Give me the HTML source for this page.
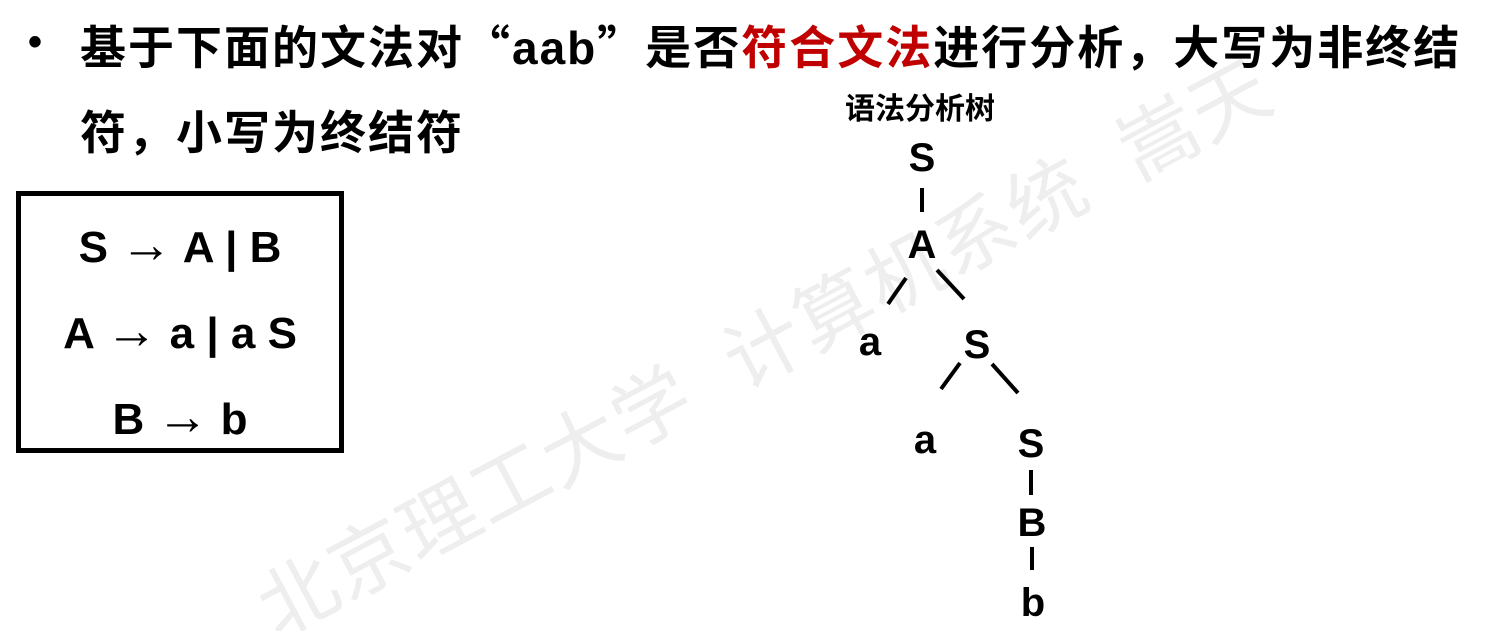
<!DOCTYPE html>
<html style="overflow:hidden"><head><meta charset="utf-8"><style>
html,body{width:1485px;height:631px;overflow:hidden}
body{margin:0;background:#fff;position:relative;font-family:"Liberation Sans","Noto Sans CJK SC",sans-serif;font-weight:bold;color:#000}
.a{position:absolute;white-space:nowrap;line-height:1}
.wm{position:absolute;left:235px;top:560px;font-size:78px;font-weight:normal;color:#eeeeee;transform-origin:0 0;transform:rotate(-28deg);white-space:nowrap;letter-spacing:2px}
.t{position:absolute;font-size:40px;line-height:1;transform:translate(-50%,-50%)}
.r{font-size:44px;text-align:center;position:absolute;left:0;width:100%;line-height:44px;height:44px}
.q{font-family:"Noto Sans CJK SC",sans-serif}
.ar{font-size:52px;font-weight:normal;line-height:44px}
</style></head><body>
<div class="wm">北京理工大学&nbsp;&nbsp;计算机系统&nbsp;&nbsp;嵩天</div>
<div class="a" style="left:28px;top:22px;font-size:40px">•</div>
<div class="a" style="left:80px;top:22px;font-size:46px;letter-spacing:2px">基于下面的文法对<span class="q">“</span>aab<span class="q">”</span>是否<span style="color:#c00000">符合文法</span>进行分析，大写为非终结</div>
<div class="a" style="left:80px;top:110px;font-size:46px;letter-spacing:2px">符，小写为终结符</div>
<div style="position:absolute;left:16px;top:191px;width:318px;height:252px;border:5px solid #000">
<div class="r" style="top:27px">S <span class="ar">→</span> A | B</div>
<div class="r" style="top:113px">A <span class="ar">→</span> a | a S</div>
<div class="r" style="top:199px">B <span class="ar">→</span> b</div>
</div>
<div class="a" style="left:845px;top:95px;font-size:30px">语法分析树</div>
<svg style="position:absolute;left:0;top:0" width="1485" height="631"><g stroke="#000" stroke-width="4">
<line x1="922" y1="188" x2="922" y2="212"/>
<line x1="906" y1="278" x2="888" y2="304"/>
<line x1="937" y1="270" x2="964" y2="299"/>
<line x1="960" y1="363" x2="941" y2="389"/>
<line x1="992" y1="364" x2="1018" y2="393"/>
<line x1="1031" y1="470" x2="1031" y2="495"/>
<line x1="1032" y1="547" x2="1032" y2="570"/>
</g></svg>
<div class="t" style="left:922px;top:158px">S</div>
<div class="t" style="left:922px;top:245px">A</div>
<div class="t" style="left:870px;top:342px">a</div>
<div class="t" style="left:977px;top:345px">S</div>
<div class="t" style="left:925px;top:440px">a</div>
<div class="t" style="left:1031px;top:444px">S</div>
<div class="t" style="left:1032px;top:523px">B</div>
<div class="t" style="left:1033px;top:603px">b</div>
</body></html>
